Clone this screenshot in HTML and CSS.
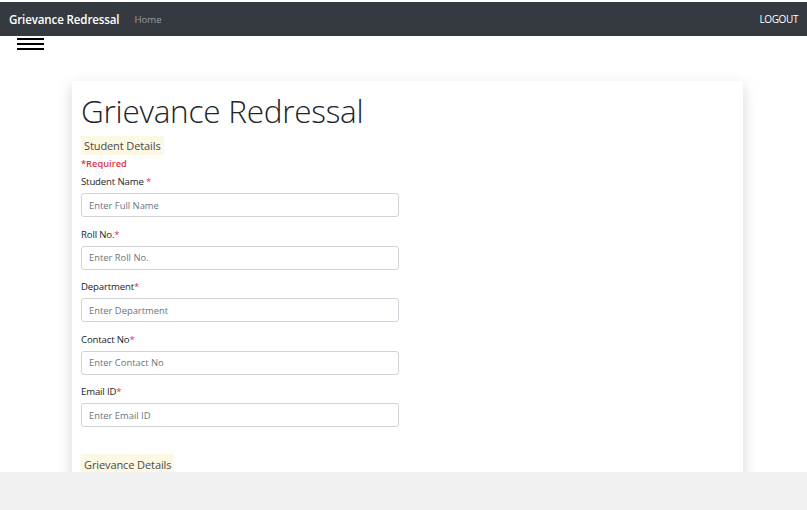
FILE: index.html
```html
<!DOCTYPE html>
<html>
<head>
<meta charset="utf-8">
<link rel="stylesheet" href="styles.css">
</head>
<body>
<div class="page">
  <div class="viewport">
    <nav class="navbar">
      <div class="nav-left">
        <span class="brand">Grievance Redressal</span>
        <span class="nav-link">Home</span>
      </div>
      <span class="logout">LOGOUT</span>
    </nav>
    <div class="toggler"><span></span><span></span><span></span></div>
    <div class="container">
      <div class="card">
        <h1 class="title">Grievance Redressal</h1>
        <div class="section"><mark>Student Details</mark></div>
        <div class="required">*Required</div>
        <div class="group">
          <label>Student Name <span class="star">*</span></label>
          <input type="text" placeholder="Enter Full Name">
        </div>
        <div class="group">
          <label>Roll No.<span class="star">*</span></label>
          <input type="text" placeholder="Enter Roll No.">
        </div>
        <div class="group">
          <label>Department<span class="star">*</span></label>
          <input type="text" placeholder="Enter Department">
        </div>
        <div class="group">
          <label>Contact No<span class="star">*</span></label>
          <input type="text" placeholder="Enter Contact No">
        </div>
        <div class="group">
          <label>Email ID<span class="star">*</span></label>
          <input type="text" placeholder="Enter Email ID">
        </div>
        <div class="section section2"><mark>Grievance Details</mark></div>
      </div>
    </div>
  </div>
  <div class="bottom"></div>
</div>
</body>
</html>
```
FILE: styles.css
```css
* { box-sizing: border-box; }
html, body { margin: 0; padding: 0; }
body {
  font-family: "Open Sans", "Noto Sans", sans-serif;
  background: #fff;
  color: #212529;
}
.page {
  height: 510px;
  display: flex;
  flex-direction: column;
  overflow: hidden;
}
.viewport {
  flex: 1;
  overflow: hidden;
  padding-top: 2px;
}
.navbar {
  height: 34px;
  background: #343a40;
  display: flex;
  align-items: center;
  justify-content: space-between;
  padding: 0 9px;
}
.nav-left { display: flex; align-items: center; }
.brand {
  color: #fff;
  font-weight: 600;
  font-size: 11.6px;
  letter-spacing: -0.15px;
}
.nav-link {
  color: rgba(255,255,255,.5);
  font-size: 9.6px;
  margin-left: 15px;
}
.logout {
  color: #fff;
  font-size: 10px;
  letter-spacing: -0.4px;
}
.toggler {
  margin: 2px 0 0 17px;
  width: 27px;
  display: flex;
  flex-direction: column;
  gap: 2.6px;
}
.toggler span {
  display: block;
  height: 2.4px;
  background: #000;
}
.container {
  padding: 31px 0 0 72px;
}
.card {
  width: 671px;
  height: 420px;
  background: #fff;
  box-shadow: 0 5px 14px rgba(0,0,0,.16);
  padding: 10px 9px 0;
}
.title {
  margin: 0;
  font-weight: 300;
  font-size: 31.5px;
  line-height: 40px;
  letter-spacing: -0.25px;
  color: #212529;
}
.section { margin-top: 2px; }
.section mark {
  background: #fcf8e3;
  color: #4a4a4a;
  font-size: 11px;
  padding: 2px 3px;
  display: inline-block;
  line-height: 15px;
  font-weight: 400;
  letter-spacing: -0.1px;
}
.required {
  color: #dc3545;
  font-size: 9.3px;
  font-weight: 600;
  margin-top: 2px;
  line-height: 13px;
}
.group { margin-top: 5px; margin-bottom: 10.5px; }
.group label {
  display: block;
  font-size: 9.6px;
  line-height: 13px;
  color: #212529;
  margin-bottom: 5px;
  letter-spacing: -0.15px;
}
.star { color: #dc3545; }
.group input {
  display: block;
  width: 318px;
  height: 24px;
  border: 1px solid #ced4da;
  border-radius: 3px;
  padding: 0 7px;
  font-family: inherit;
  font-size: 9.4px;
  color: #495057;
  background: #fff;
}
.group input::placeholder { color: #6c757d; }
.section2 { margin-top: 24.5px; }
.section2 mark { font-size: 11px; padding: 3px 3px; }
.bottom {
  height: 38px;
  background: #f0f0f0;
  flex: none;
}
```
